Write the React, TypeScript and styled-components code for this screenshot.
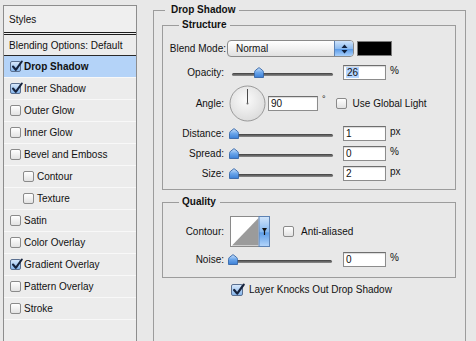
import styled, { createGlobalStyle } from "styled-components";

const GlobalStyle = createGlobalStyle`
    html, body {
        margin: 0;
        padding: 0;
        background: #e8e8e8;
        overflow: hidden;
    }
    body {
        font-family: "Liberation Sans", Arial, sans-serif;
        font-size: 10px;
        color: #111;
    }
`;

const Page = styled.div`
    display: flex;
    align-items: flex-start;
    padding: 5px 0 0 3px;
    width: 476px;
    height: 341px;
    box-sizing: border-box;
`;

// left list of styles
const StylePanel = styled.div`
    width: 134px;
    height: 345px;
    flex-shrink: 0;
    box-sizing: border-box;
    border: 1px solid #8d8d8d;
    background: #ececec;
    display: flex;
    flex-direction: column;
`;
const PanelHeader = styled.div`
    height: 26px;
    display: flex;
    align-items: center;
    padding-left: 5px;
    background: #efefef;
    border-bottom: 3px double #1c1c1c;
`;
const BlendingRow = styled.div`
    height: 20px;
    display: flex;
    align-items: center;
    padding-left: 5px;
    border-bottom: 1px solid #2a2a2a;
`;
const StyleRow = styled.div<{ $selected?: boolean; $indent?: boolean }>`
    height: 21px;
    display: flex;
    align-items: center;
    gap: 3px;
    padding-left: ${(p) => (p.$indent ? "19px" : "6px")};
    border-bottom: 1px solid #f8f8f8;
    background: ${(p) => (p.$selected ? "#b4d3f8" : "transparent")};
    font-weight: ${(p) => (p.$selected ? "bold" : "normal")};
`;

const Box = styled.span<{ $size?: number }>`
    position: relative;
    display: inline-block;
    flex-shrink: 0;
    width: ${(p) => p.$size || 11}px;
    height: ${(p) => p.$size || 11}px;
    box-sizing: border-box;
    border: 1px solid #8a8a8a;
    border-radius: 2px;
    background: linear-gradient(#ffffff, #e2e2e2);
    &[data-on="true"] {
        border-color: #5a6f8f;
        background: linear-gradient(#d6e7fb, #86b6ec);
    }
    svg {
        position: absolute;
        left: 0;
        top: -2px;
    }
`;

function Check({ on, size }: { on?: boolean; size?: number }) {
    const s = size || 11;
    return (
        <Box $size={s} data-on={on ? "true" : "false"}>
            {on && (
                <svg width={s + 1} height={s + 1} viewBox="0 0 12 12">
                    <path
                        d="M2 6.5 L4.8 9.8 L10.8 1.5"
                        fill="none"
                        stroke="#16233d"
                        strokeWidth="2.1"
                        strokeLinecap="round"
                        strokeLinejoin="round"
                    />
                </svg>
            )}
        </Box>
    );
}

// right side
const Group = styled.fieldset<{ $w: number }>`
    margin: 0;
    min-width: 0;
    box-sizing: border-box;
    width: ${(p) => p.$w}px;
    border: 1px solid #9c9c9c;
`;
const OuterGroup = styled(Group)`
    margin: -1px 0 0 16px;
    height: 346px;
    padding: 3px 9px 0 8px;
    flex-shrink: 0;
`;
const InnerGroup = styled(Group)<{ $pt: number; $pb: number }>`
    padding: ${(p) => p.$pt}px 0 ${(p) => p.$pb}px 0;
    display: flex;
    flex-direction: column;
`;
const Legend = styled.legend<{ $ml: number }>`
    font-weight: bold;
    line-height: 12px;
    height: 12px;
    padding: 0 4px 0 ${(p) => (p.$ml > 10 ? 3 : 6)}px;
    margin-left: ${(p) => p.$ml}px;
`;

const Row = styled.div<{ $h: number; $mt: number }>`
    display: flex;
    align-items: center;
    height: ${(p) => p.$h}px;
    margin-top: ${(p) => p.$mt}px;
`;
const Label = styled.span`
    width: 61px;
    text-align: right;
    white-space: nowrap;
    flex-shrink: 0;
`;
const WideLabel = styled(Label)`
    width: 63px;
`;

const Select = styled.div`
    margin-left: 1px;
    width: 127px;
    height: 17px;
    box-sizing: border-box;
    border: 1px solid #8a8a8a;
    border-radius: 4px;
    background: linear-gradient(#ffffff, #f1f1f1 50%, #e0e0e0);
    display: flex;
    align-items: center;
    justify-content: space-between;
    overflow: hidden;
    padding-left: 8px;
`;
const Stepper = styled.span`
    width: 18px;
    height: 100%;
    border-left: 1px solid #5d82b3;
    background: linear-gradient(#cfe3fb, #8ebcf0 50%, #5b9be8 55%, #a9d0fb);
    display: flex;
    align-items: center;
    justify-content: center;
`;
const Swatch = styled.span`
    margin-left: 3px;
    width: 35px;
    height: 15px;
    box-sizing: border-box;
    border: 1px solid #7a7a7a;
    background: #000;
`;

const SliderBox = styled.div<{ $ml: number }>`
    position: relative;
    width: 106px;
    height: 12px;
    margin-left: ${(p) => p.$ml}px;
    flex-shrink: 0;
`;
const Track = styled.div`
    position: absolute;
    left: 3px;
    right: 2px;
    top: 6px;
    height: 3px;
    border-radius: 2px;
    background: linear-gradient(#3e3e3e, #8e8e8e);
`;
const Thumb = styled.svg`
    position: absolute;
    top: 0;
`;

function Slider({ value, ml }: { value: number; ml: number }) {
    return (
        <SliderBox $ml={ml}>
            <Track />
            <Thumb
                width="10"
                height="11"
                viewBox="0 0 10 11"
                style={{ left: (value / 100) * 96 }}
            >
                <defs>
                    <linearGradient id="tg" x1="0" y1="0" x2="0" y2="1">
                        <stop offset="0" stopColor="#cfe4fb" />
                        <stop offset="0.5" stopColor="#6aa5ea" />
                        <stop offset="1" stopColor="#3b7fd6" />
                    </linearGradient>
                </defs>
                <path
                    d="M0.5 10.5 V5.5 Q0.5 4.2 1.6 3.2 L5 0.6 L8.4 3.2 Q9.5 4.2 9.5 5.5 V10.5 Z"
                    fill="url(#tg)"
                    stroke="#3566a8"
                    strokeWidth="0.9"
                />
            </Thumb>
        </SliderBox>
    );
}

const Field = styled.div<{ $w: number; $ml: number }>`
    width: ${(p) => p.$w}px;
    height: 15px;
    margin-left: ${(p) => p.$ml}px;
    box-sizing: border-box;
    border: 1px solid #8c8c8c;
    border-top-color: #6e6e6e;
    box-shadow: inset 0 1px 1px rgba(0, 0, 0, 0.15);
    background: #fff;
    display: flex;
    align-items: center;
    padding-left: 2px;
    flex-shrink: 0;
`;
const Selected = styled.span`
    background: #b5d5ff;
    padding: 0 1px;
`;
const Unit = styled.span`
    margin-left: 4px;
    align-self: flex-start;
    margin-top: 1px;
`;
const Degree = styled.span`
    margin-left: 4px;
    align-self: flex-start;
    margin-top: 9px;
    font-size: 9px;
`;
const CheckLabel = styled.div<{ $ml: number; $gap: number }>`
    display: flex;
    align-items: center;
    margin-left: ${(p) => p.$ml}px;
    gap: ${(p) => p.$gap}px;
`;

function Dial() {
    return (
        <svg width="37" height="37" viewBox="0 0 37 37" style={{ marginLeft: 5 }}>
            <defs>
                <radialGradient id="dg" cx="0.45" cy="0.4" r="0.65">
                    <stop offset="0" stopColor="#fbfbfb" />
                    <stop offset="1" stopColor="#dadada" />
                </radialGradient>
            </defs>
            <circle cx="18.5" cy="18.5" r="17.5" fill="url(#dg)" stroke="#9a9a9a" />
            <line x1="18.5" y1="18.5" x2="18.5" y2="4" stroke="#4a4a4a" strokeWidth="1" />
            <circle cx="18.5" cy="18.5" r="1" fill="#6a6a6a" />
        </svg>
    );
}

function ContourPreview() {
    return (
        <svg width="40" height="31" viewBox="0 0 40 31" style={{ marginLeft: 6 }}>
            <defs>
                <linearGradient id="cg" x1="0" y1="0" x2="0" y2="1">
                    <stop offset="0" stopColor="#d3e6fb" />
                    <stop offset="0.5" stopColor="#86b8ef" />
                    <stop offset="0.55" stopColor="#5e9de6" />
                    <stop offset="1" stopColor="#b5d6fb" />
                </linearGradient>
            </defs>
            <rect x="0.5" y="0.5" width="39" height="30" fill="#fff" stroke="#8a8a8a" />
            <polygon points="2,29.5 28.5,2 28.5,29.5" fill="#9b9b9b" />
            <rect x="29" y="0.5" width="10.5" height="30" fill="url(#cg)" stroke="#5d82b3" />
            <path d="M32 12 H37 L34.5 16 Z" fill="#111" />
            <line x1="34.5" y1="15" x2="34.5" y2="19" stroke="#111" strokeWidth="1.2" />
        </svg>
    );
}

const styleItems = [
    { name: "Drop Shadow", on: true, selected: true },
    { name: "Inner Shadow", on: true },
    { name: "Outer Glow" },
    { name: "Inner Glow" },
    { name: "Bevel and Emboss" },
    { name: "Contour", indent: true },
    { name: "Texture", indent: true },
    { name: "Satin" },
    { name: "Color Overlay" },
    { name: "Gradient Overlay", on: true },
    { name: "Pattern Overlay" },
    { name: "Stroke" },
];

export default function App() {
    return (
        <>
            <GlobalStyle />
            <Page>
                <StylePanel>
                    <PanelHeader>Styles</PanelHeader>
                    <BlendingRow>Blending Options: Default</BlendingRow>
                    {styleItems.map((item) => (
                        <StyleRow
                            key={item.name}
                            $selected={item.selected}
                            $indent={item.indent}
                        >
                            <Check on={item.on} />
                            {item.name}
                        </StyleRow>
                    ))}
                </StylePanel>

                <OuterGroup $w={313}>
                    <Legend $ml={3}>Drop Shadow</Legend>
                    <InnerGroup $w={294} $pt={9} $pb={7}>
                        <Legend $ml={16}>Structure</Legend>
                        <Row $h={17} $mt={0}>
                            <WideLabel>Blend Mode:</WideLabel>
                            <Select>
                                Normal
                                <Stepper>
                                    <svg width="7" height="10" viewBox="0 0 7 10">
                                        <path d="M0.5 4 L3.5 0.5 L6.5 4 Z" fill="#10203c" />
                                        <path d="M0.5 6 L3.5 9.5 L6.5 6 Z" fill="#10203c" />
                                    </svg>
                                </Stepper>
                            </Select>
                            <Swatch />
                        </Row>
                        <Row $h={17} $mt={7}>
                            <Label>Opacity:</Label>
                            <Slider value={26} ml={5} />
                            <Field $w={43} $ml={8}>
                                <Selected>26</Selected>
                            </Field>
                            <Unit>%</Unit>
                        </Row>
                        <Row $h={37} $mt={4}>
                            <Label>Angle:</Label>
                            <Dial />
                            <Field $w={50} $ml={2}>
                                90
                            </Field>
                            <Degree>°</Degree>
                            <CheckLabel $ml={10} $gap={6}>
                                <Check />
                                Use Global Light
                            </CheckLabel>
                        </Row>
                        <Row $h={17} $mt={3}>
                            <Label>Distance:</Label>
                            <Slider value={0} ml={5} />
                            <Field $w={43} $ml={8}>
                                1
                            </Field>
                            <Unit>px</Unit>
                        </Row>
                        <Row $h={17} $mt={3}>
                            <Label>Spread:</Label>
                            <Slider value={0} ml={5} />
                            <Field $w={43} $ml={8}>
                                0
                            </Field>
                            <Unit>%</Unit>
                        </Row>
                        <Row $h={17} $mt={3}>
                            <Label>Size:</Label>
                            <Slider value={0} ml={5} />
                            <Field $w={43} $ml={8}>
                                2
                            </Field>
                            <Unit>px</Unit>
                        </Row>
                    </InnerGroup>

                    <InnerGroup $w={294} $pt={8} $pb={9} style={{ marginTop: 6 }}>
                        <Legend $ml={16}>Quality</Legend>
                        <Row $h={31} $mt={0}>
                            <Label>Contour:</Label>
                            <ContourPreview />
                            <CheckLabel $ml={13} $gap={7}>
                                <Check />
                                Anti-aliased
                            </CheckLabel>
                        </Row>
                        <Row $h={17} $mt={4}>
                            <Label>Noise:</Label>
                            <Slider value={0} ml={4} />
                            <Field $w={43} $ml={9}>
                                0
                            </Field>
                            <Unit>%</Unit>
                        </Row>
                    </InnerGroup>

                    <Row $h={15} $mt={4}>
                        <CheckLabel $ml={69} $gap={6}>
                            <Check on size={12} />
                            Layer Knocks Out Drop Shadow
                        </CheckLabel>
                    </Row>
                </OuterGroup>
            </Page>
        </>
    );
}
